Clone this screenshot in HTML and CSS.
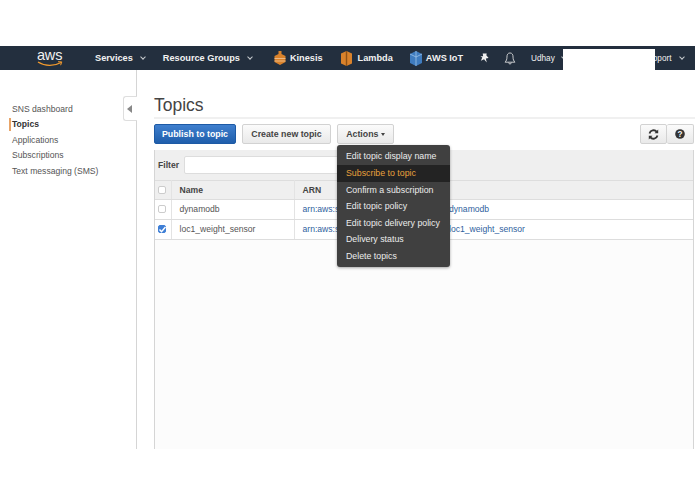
FILE: index.html
```html
<!DOCTYPE html>
<html lang="en">
<head>
    <meta charset="UTF-8">
    <meta name="viewport" content="width=device-width, initial-scale=1.0">
    <title>Topics</title>
    <link rel="stylesheet" href="styles.css">
</head>
<body>

    <header class="navbar">
        <svg class="aws-logo" width="28" height="20" viewBox="0 0 28 20">
            <text class="aws-word" x="0" y="12">aws</text>
            <path d="M1 14C8 18.500 17 18.500 24 14.500" fill="none" stroke="#f29a2e" stroke-width="1.300"/>
            <path d="M21 13.700l3.800.2-1.200 3.300" fill="none" stroke="#f29a2e" stroke-width="1"/>
        </svg>
        <span class="nav-item nav-services">Services <i class="chev"></i></span>
        <span class="nav-item nav-groups">Resource Groups <i class="chev"></i></span>
        <span class="nav-item nav-kinesis">
            <svg width="12" height="14" viewBox="0 0 12 14"><path d="M4.500 0h3v3l4 2v6L6 14 .5 11V5l4-2z" fill="#d9822b"/><path d="M.5 7.500h11M.5 10h11" stroke="#f3c79b" stroke-width=".8"/></svg>
            Kinesis
        </span>
        <span class="nav-item nav-lambda">
            <svg width="11" height="15" viewBox="0 0 11 15"><path d="M5.500 0l5.500 2.500v10L5.500 15 0 12.500v-10z" fill="#d9822b"/><path d="M5.500 0v15" stroke="#8f5216" stroke-width="1.400"/></svg>
            Lambda
        </span>
        <span class="nav-item nav-iot">
            <svg width="12" height="15" viewBox="0 0 12 15"><path d="M6 0l6 3v9l-6 3-6-3V3z" fill="#3f7cbf"/><path d="M6 0v15M0 3l6 3 6-3" stroke="#9cc3e8" stroke-width=".8" fill="none"/></svg>
            AWS IoT
        </span>
        <svg class="nav-pin" width="9" height="10" viewBox="0 0 10 11"><path d="M3 .5h4.500L7 2.500l2.500 3-3 .5 1 4.500L4.500 7 1 8.500 2.500 5 .5 3.500H3.500z" fill="#f0f0f0"/></svg>
        <svg class="nav-bell" width="12" height="13" viewBox="0 0 13 14"><path d="M6.500 1C4 1 3.200 3 3.200 5.500c0 2.500-.7 4-2 5.500h10.600c-1.300-1.500-2-3-2-5.500C9.800 3 9 1 6.500 1zM5 11.500c.2 1 .8 1.500 1.500 1.500s1.300-.5 1.500-1.500" fill="none" stroke="#e8e8e8" stroke-width=".9"/></svg>
        <span class="nav-small nav-user">Udhay <i class="chev"></i></span>
        <span class="nav-small nav-support">Support <i class="chev"></i></span>
    </header>
    <div class="redacted"></div>

    <div class="layout">
        <aside class="sidebar">
            <ul class="side-menu">
                <li>SNS dashboard</li>
                <li class="active">Topics</li>
                <li>Applications</li>
                <li>Subscriptions</li>
                <li>Text messaging (SMS)</li>
            </ul>
            <div class="collapse-tab"><i></i></div>
        </aside>

        <main class="content">
            <h1>Topics</h1>
            <div class="toolbar">
                <button class="btn btn-primary">Publish to topic</button>
                <button class="btn btn-create">Create new topic</button>
                <button class="btn btn-actions">Actions <i class="caret"></i></button>
                <div class="btn-group">
                    <button class="btn">
                        <svg width="11" height="11" viewBox="0 0 11 11"><path d="M1.500 4.500A4.200 4.200 0 0 1 8.800 2.800M9.500 6.500A4.200 4.200 0 0 1 2.200 8.200" fill="none" stroke="#333" stroke-width="1.800"/><path d="M10.200.6v3.700H6.500zM.8 10.400V6.700h3.700z" fill="#333"/></svg>
                    </button>
                    <button class="btn">
                        <svg width="10" height="10" viewBox="0 0 11 11"><circle cx="5.500" cy="5.500" r="5.300" fill="#333"/><text class="help-mark" x="5.500" y="8.600">?</text></svg>
                    </button>
                </div>
            </div>

            <div class="panel">
                <div class="filter-row">
                    <label>Filter</label>
                    <input class="filter-input" type="text">
                </div>
                <table class="topics">
                    <colgroup>
                        <col class="col-check"><col class="col-name"><col>
                    </colgroup>
                    <thead>
                        <tr><th><span class="check"></span></th><th>Name</th><th>ARN</th></tr>
                    </thead>
                    <tbody>
                        <tr>
                            <td><span class="check"></span></td>
                            <td>dynamodb</td>
                            <td><span class="arn"><a>arn:aws:s</a><a>dynamodb</a></span></td>
                        </tr>
                        <tr>
                            <td><span class="check checked"><svg width="9" height="9" viewBox="0 0 9 9"><path d="M1.500 4.500l2 2.200L7.500 2" fill="none" stroke="#fff" stroke-width="1.500"/></svg></span></td>
                            <td>loc1_weight_sensor</td>
                            <td><span class="arn"><a>arn:aws:s</a><a>loc1_weight_sensor</a></span></td>
                        </tr>
                    </tbody>
                </table>
            </div>

            <ul class="dropdown">
                <li>Edit topic display name</li>
                <li class="hover">Subscribe to topic</li>
                <li>Confirm a subscription</li>
                <li>Edit topic policy</li>
                <li>Edit topic delivery policy</li>
                <li>Delivery status</li>
                <li>Delete topics</li>
            </ul>
        </main>
    </div>

</body>
</html>
```

FILE: styles.css
```css
* {
    box-sizing: border-box;
}
html, body {
    margin: 0;
    background: #fff;
}
body {
    height: 494px;
    overflow: hidden;
    padding-top: 46px;
    position: relative;
    font-family: "Liberation Sans", Arial, sans-serif;
    font-size: 8.6px;
    color: #444;
}

/* top bar */
.navbar {
    height: 24px;
    background: #232f3e;
    display: flex;
    align-items: center;
    color: #f2f2f2;
    font-size: 9.2px;
    font-weight: bold;
    white-space: nowrap;
}
.navbar svg {
    flex: none;
}
.aws-logo {
    margin-left: 37px;
}
.aws-word {
    font-size: 14.500px;
    font-weight: normal;
    fill: #f2f2f2;
    letter-spacing: -0.2px;
}
.nav-item {
    display: flex;
    align-items: center;
    gap: 4px;
}
.nav-services { margin-left: 30px; }
.nav-groups { margin-left: 18px; }
.nav-kinesis { margin-left: 22px; }
.nav-lambda { margin-left: 18px; gap: 6px; }
.nav-iot { margin-left: 17px; }
.nav-pin { margin-left: 17px; }
.nav-bell { margin-left: 15px; }
.nav-small {
    font-size: 8.2px;
    font-weight: normal;
    display: flex;
    align-items: center;
    gap: 3px;
}
.nav-user { margin-left: 15px; }
.nav-support { margin-left: 77px; }
.nav-support .chev { margin-left: 6px; }
.chev {
    width: 4px;
    height: 4px;
    margin: 0 0 2px 4px;
    border-right: 1px solid #c8ccd0;
    border-bottom: 1px solid #c8ccd0;
    transform: rotate(45deg);
}
.redacted {
    position: absolute;
    left: 563px;
    top: 49px;
    width: 92px;
    height: 21px;
    background: #fff;
}

/* page */
.layout {
    display: flex;
    height: 379px;
}
.sidebar {
    width: 137px;
    flex: none;
    border-right: 1px solid #d5d5d5;
    position: relative;
    padding-top: 32px;
}
.side-menu {
    list-style: none;
    margin: 0;
    padding: 0;
}
.side-menu li {
    height: 15.400px;
    line-height: 15px;
    padding-left: 12px;
    color: #555;
}
.side-menu .active {
    font-weight: bold;
    color: #333;
    box-shadow: inset 2px 0 0 #e8a468;
    margin-left: 9px;
    padding-left: 3px;
    height: 13px;
    line-height: 13px;
    margin-top: 1px;
    margin-bottom: 1.400px;
}
.collapse-tab {
    position: absolute;
    left: 123px;
    top: 26px;
    width: 14px;
    height: 25px;
    background: #fff;
    border: 1px solid #dedede;
    border-right: none;
    border-radius: 3px 0 0 3px;
    display: flex;
    align-items: center;
    justify-content: center;
}
.collapse-tab i {
    margin-right: 2px;
    border-right: 5px solid #888;
    border-top: 4px solid transparent;
    border-bottom: 4px solid transparent;
}

.content {
    flex: 1;
    padding-left: 17px;
    position: relative;
    min-width: 0;
}
h1 {
    margin: 0;
    height: 49px;
    padding-top: 25px;
    font-size: 17.500px;
    line-height: 21px;
    font-weight: normal;
    color: #444;
    position: relative;
}
h1::after {
    content: "";
    position: absolute;
    left: 0;
    right: 0;
    top: 47px;
    height: 2px;
    background: #f0f0f0;
}
.toolbar {
    display: flex;
    gap: 6px;
    height: 20px;
    margin-top: 5px;
}
.btn {
    height: 20px;
    padding: 0;
    font-family: inherit;
    font-size: 8.800px;
    font-weight: bold;
    color: #444;
    background: linear-gradient(#fbfbfb, #e9e9e9);
    border: 1px solid #d2d2d2;
    border-radius: 2px;
    white-space: nowrap;
}
.btn-primary {
    width: 82px;
    color: #fff;
    border-color: #1d5aa5;
    background: linear-gradient(#3f7fce, #1f5eab);
}
.btn-create {
    width: 89px;
}
.btn-actions {
    width: 57px;
}
.caret {
    display: inline-block;
    vertical-align: middle;
    border-top: 3px solid #444;
    border-left: 2.500px solid transparent;
    border-right: 2.500px solid transparent;
}
.btn-group {
    margin-left: auto;
    display: flex;
    margin-right: 1px;
}
.btn-group .btn {
    width: 27px;
    display: flex;
    align-items: center;
    justify-content: center;
}
.btn-group .btn + .btn {
    border-left: none;
}
.help-mark {
    font-size: 9px;
    font-weight: bold;
    text-anchor: middle;
    fill: #f2f2f2;
}

.panel {
    margin-top: 6px;
    height: 299px;
    margin-right: 1px;
    border-left: 1px solid #d5d5d5;
    border-right: 1px solid #d5d5d5;
    background: #fcfcfc;
}
.filter-row {
    height: 30px;
    background: #efefef;
    display: flex;
    align-items: center;
    padding-left: 3px;
    gap: 5px;
    font-weight: bold;
    color: #444;
}
.filter-input {
    width: 260px;
    height: 18px;
    margin-top: -1px;
    border: 1px solid #ddd;
    border-radius: 2px;
    background: #fff;
}
.topics {
    width: 100%;
    table-layout: fixed;
    border-collapse: collapse;
}
.col-check { width: 16px; }
.col-name { width: 123px; }
.topics th, .topics td {
    text-align: left;
    padding: 0 0 0 8px;
    white-space: nowrap;
    overflow: visible;
    border-right: 1px solid #e3e3e3;
    border-bottom: 1px solid #ddd;
}
.topics th:first-child, .topics td:first-child {
    padding-left: 3px;
}
.topics th:last-child, .topics td:last-child {
    border-right: none;
}
.topics th {
    height: 19px;
    background: #efefef;
    color: #444;
    border-top: 1px solid #ddd;
}
.topics td {
    height: 20px;
    padding-bottom: 2px;
    background: #fff;
    color: #555;
}
.check {
    display: block;
    width: 8px;
    height: 8px;
    background: #fff;
    border: 1px solid #ccc;
    border-radius: 2px;
}
.check.checked {
    background: #3f7fd6;
    border-color: #3f7fd6;
}
.check svg {
    display: block;
    margin: -1px;
}
.arn {
    display: flex;
    color: #2f5f9e;
}
.arn a:first-child {
    width: 146.500px;
}

/* actions menu */
.dropdown {
    position: absolute;
    left: 200px;
    top: 75px;
    width: 113px;
    height: 122px;
    margin: 0;
    padding: 3.400px 0 0;
    list-style: none;
    background: #404040;
    border-radius: 3px;
    box-shadow: 0 1px 3px rgba(0, 0, 0, 0.35);
    font-size: 8.800px;
    color: #ececec;
}
.dropdown li {
    height: 16.600px;
    line-height: 16.600px;
    padding-left: 9px;
    white-space: nowrap;
}
.dropdown .hover {
    background: #232323;
    color: #e8a13c;
}
```
